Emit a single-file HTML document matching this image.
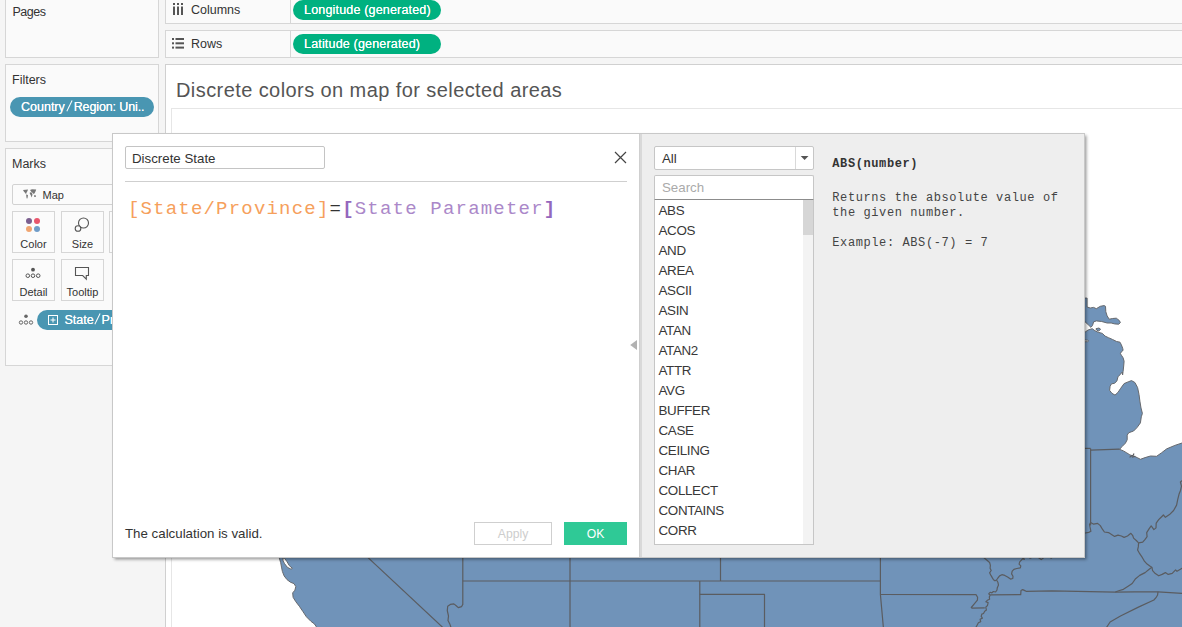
<!DOCTYPE html>
<html>
<head>
<meta charset="utf-8">
<title>Tableau - Discrete colors on map</title>
<style>
*{box-sizing:border-box;margin:0;padding:0}
html,body{width:1182px;height:627px;overflow:hidden}
body{background:#f5f5f5;font-family:"Liberation Sans",sans-serif;font-size:12.5px;color:#333;position:relative}
.a{position:absolute}
.t{position:absolute;white-space:nowrap;font-size:12.5px;line-height:14px;color:#333}
.card{position:absolute;left:5px;width:154px;background:#fafafa;border:1px solid #d6d6d6}
.shelf{position:absolute;left:165px;width:1030px;background:#fafafa;border:1px solid #d6d6d6}
.pill{position:absolute;height:20px;border-radius:10px}
.pt{position:absolute;white-space:nowrap;font-size:12.5px;line-height:14px;color:#fff;text-shadow:0 0 .4px #fff}
.green{background:#00b180}
.blue{background:#4996b2}
.mbtn{position:absolute;width:43px;height:42px;border:1px solid #d6d6d6;background:#fbfbfb}
#view{position:absolute;left:165px;top:64px;width:1030px;height:580px;background:#fff;border:1px solid #d0d0d0}
#title{position:absolute;left:176px;top:78px;font-size:20px;line-height:24px;color:#555;white-space:nowrap;letter-spacing:.42px}
#viz{position:absolute;left:171px;top:108px;width:1030px;height:540px;border-left:1px solid #e6e6e6;border-top:1px solid #e6e6e6}
#dlg{position:absolute;left:112px;top:133px;width:973px;height:425px;background:#eeeeee;border:1px solid #c8c8c8;box-shadow:1.5px 1.5px 3px rgba(0,0,0,.4)}
#dl{position:absolute;left:113px;top:134px;width:526px;height:423px;background:#fff}
#grip{position:absolute;left:639px;top:134px;width:3px;height:423px;background:#d9d9d9;border-left:1px solid #cfcfcf}
.mono{font-family:"Liberation Mono",monospace}
#code{position:absolute;left:127.9px;top:196px;font-size:19px;letter-spacing:1.2px;line-height:26px;white-space:pre}
.fn{position:absolute;left:658.5px;font-size:13.4px;letter-spacing:-.35px;line-height:20px;white-space:nowrap;color:#383838}
.d{font-size:13.3px}
</style>
</head>
<body>

<!-- left cards -->
<div class="card" style="top:-20px;height:78px"></div>
<div class="t" style="left:12.5px;top:4.5px;letter-spacing:-.5px">Pages</div>

<div class="card" style="top:64px;height:78px"></div>
<div class="t" style="left:12px;top:73px">Filters</div>
<div class="pill blue" style="left:10px;top:97px;width:144px"></div>
<div class="pt" style="left:21px;top:100px">Country<span style="display:inline-block;width:8.9px;height:10px;position:relative"><i style="position:absolute;left:3.9px;top:-.8px;width:1.25px;height:11.8px;background:#fff;transform:rotate(26deg)"></i></span><span style="letter-spacing:-.12px">Region: Uni..</span></div>

<div class="card" style="top:148px;height:218px"></div>
<div class="t" style="left:12px;top:157px">Marks</div>
<div class="a" style="left:12px;top:184px;width:140px;height:21px;border:1px solid #d2d2d2;background:#fbfbfb;border-radius:2px"></div>
<svg class="a" style="left:23px;top:189.3px" width="14" height="10.5" viewBox="0 0 14 10" preserveAspectRatio="none"><g fill="#777"><path d="M0 1l5-.6-.5 1.6-1 1.5L3 5 2 3.5 1 2.5z"/><path d="M3.4 5l1.6 1-.4 2-.6 1.6-.5-1.6-.3-1.5z"/><path d="M7 1l2-.8 4.2.3-.6 1.6-1 1.9-1.1 1L10 3.6 9 3.5z"/><path d="M6.9 3l2.1.5.5 2-1 2.5L7.8 6 6.8 4.5z"/><path d="M11 6h1.8v1.5h-1.5z"/></g></svg>
<div class="t" style="left:42.5px;top:188.3px;font-size:11px">Map</div>

<div class="mbtn" style="left:12px;top:211px"></div>
<div class="mbtn" style="left:61px;top:211px"></div>
<div class="mbtn" style="left:109px;top:211px"></div>
<div class="mbtn" style="left:12px;top:259px"></div>
<div class="mbtn" style="left:61px;top:259px"></div>
<svg class="a" style="left:24px;top:216px" width="18" height="18" viewBox="0 0 18 18"><circle cx="5" cy="5" r="3" fill="#7b5f8f"/><circle cx="13" cy="5" r="3" fill="#e8566c"/><circle cx="5" cy="13" r="3" fill="#f0a571"/><circle cx="13" cy="13" r="3" fill="#6f9cc8"/></svg>
<div class="t" style="left:12px;top:237px;width:43px;text-align:center;font-size:11px">Color</div>
<svg class="a" style="left:73px;top:216px" width="18" height="18" viewBox="0 0 18 18" fill="none" stroke="#555" stroke-width="1.1"><circle cx="10.5" cy="7" r="5"/><circle cx="5" cy="12.5" r="2.8" fill="#fbfbfb"/></svg>
<div class="t" style="left:61px;top:237px;width:43px;text-align:center;font-size:11px">Size</div>
<svg class="a" style="left:24px;top:266px" width="18" height="14" viewBox="0 0 18 14"><circle cx="9" cy="3.7" r="1.9" fill="#555"/><g fill="none" stroke="#555" stroke-width="1"><circle cx="3.8" cy="9.7" r="1.8"/><circle cx="9" cy="9.7" r="1.8"/><circle cx="14.2" cy="9.7" r="1.8"/></g></svg>
<div class="t" style="left:12px;top:285px;width:43px;text-align:center;font-size:11px">Detail</div>
<svg class="a" style="left:74px;top:266px" width="16" height="15" viewBox="0 0 16 15" fill="none" stroke="#555" stroke-width="1.1"><path d="M1.5 1.5h13v8h-2.2v3.6l-3.6-3.6H1.5z"/></svg>
<div class="t" style="left:61px;top:285px;width:43px;text-align:center;font-size:11px">Tooltip</div>

<svg class="a" style="left:18px;top:313px" width="18" height="14" viewBox="0 0 18 14"><circle cx="8" cy="3.2" r="1.8" fill="#666"/><g fill="none" stroke="#666" stroke-width="1"><circle cx="3" cy="9.5" r="1.7"/><circle cx="8" cy="9.5" r="1.7"/><circle cx="13" cy="9.5" r="1.7"/></g></svg>
<div class="pill blue" style="left:37px;top:310px;width:120px"></div>
<svg class="a" style="left:48px;top:315px" width="10" height="10" viewBox="0 0 10 10" fill="none" stroke="#fff" stroke-width="1"><rect x=".5" y=".5" width="9" height="9"/><path d="M2.5 5h5M5 2.5v5"/></svg>
<div class="pt" style="left:64.5px;top:313px">State<span style="display:inline-block;width:7.9px;height:10px;position:relative"><i style="position:absolute;left:3.4px;top:-.8px;width:1.25px;height:11.8px;background:#fff;transform:rotate(26deg)"></i></span>Province</div>

<!-- shelves -->
<div class="shelf" style="top:-10px;height:34px"></div>
<div class="shelf" style="top:30px;height:28px"></div>
<div class="a" style="left:290px;top:0;width:1px;height:23px;background:#d6d6d6"></div>
<div class="a" style="left:290px;top:31px;width:1px;height:26px;background:#d6d6d6"></div>
<svg class="a" style="left:172px;top:3px" width="12" height="12" viewBox="0 0 12 12" fill="#555"><rect x="1" y="0" width="2" height="2"/><rect x="5" y="0" width="2" height="2"/><rect x="9" y="0" width="2" height="2"/><rect x="1" y="3.5" width="2" height="8.5"/><rect x="5" y="3.5" width="2" height="8.5"/><rect x="9" y="3.5" width="2" height="8.5"/></svg>
<div class="t" style="left:191px;top:3px">Columns</div>
<svg class="a" style="left:172px;top:38px" width="12" height="11" viewBox="0 0 12 11" fill="#555"><rect x="0" y="0" width="2" height="2"/><rect x="0" y="4.3" width="2" height="2"/><rect x="0" y="8.6" width="2" height="2"/><rect x="3.5" y="0" width="8.5" height="2"/><rect x="3.5" y="4.3" width="8.5" height="2"/><rect x="3.5" y="8.6" width="8.5" height="2"/></svg>
<div class="t" style="left:191px;top:37px">Rows</div>
<div class="pill green" style="left:293px;top:0;width:148px"></div>
<div class="pt" style="left:304px;top:3px;letter-spacing:.18px">Longitude (generated)</div>
<div class="pill green" style="left:293px;top:34px;width:148px"></div>
<div class="pt" style="left:304px;top:37px;letter-spacing:.18px">Latitude (generated)</div>

<!-- view -->
<div id="view"></div>
<div id="title">Discrete colors on map for selected areas</div>
<div id="viz"></div>
<svg class="a" style="left:0;top:0" width="1182" height="627" viewBox="0 0 1182 627">
<g fill="#7093b9" stroke="#66696e" stroke-width="1" stroke-linejoin="round">
<path d="M278.0,548.4 279.2,557.7 280.7,562.7 281.5,567.1 282.4,571.5 284.2,576.0 286.9,579.5 290.4,582.2 294.0,583.6 295.8,586.6 294.9,590.2 292.7,592.9 293.1,597.3 295.8,601.7 299.3,606.2 302.9,611.5 306.4,616.8 310.9,621.3 314.4,623.9 316.5,627.0 318.9,630.2 330.0,640.0 1195.0,640.0 1195.0,441.0 1184.4,442.0 1182.0,443.0 1174.9,445.4 1166.8,448.8 1161.4,452.9 1156.6,456.3 1150.5,456.0 1145.1,457.6 1140.4,459.3 1137.6,457.8 1134.3,456.3 1129.9,454.9 1126.8,452.9 1123.4,450.9 1119.3,449.2 1119.3,449.6 1122.0,446.6 1125.4,443.2 1127.2,439.8 1127.2,435.1 1128.8,432.7 1133.6,431.0 1137.0,427.6 1140.4,422.9 1141.3,416.8 1142.4,413.4 1141.0,408.0 1139.9,401.2 1139.0,394.4 1137.6,387.6 1134.9,382.5 1131.5,380.6 1128.1,381.9 1124.1,383.6 1120.7,388.3 1118.0,392.4 1115.0,395.1 1111.9,393.3 1109.6,390.3 1110.1,386.3 1111.5,383.8 1114.6,383.3 1116.9,380.9 1118.0,376.8 1120.0,374.7 1122.3,372.0 1122.6,375.0 1123.1,371.4 1123.7,366.0 1124.1,361.2 1123.1,357.8 1121.8,355.8 1120.4,353.7 1121.4,351.7 1123.1,350.4 1122.7,348.3 1121.4,344.9 1120.0,342.2 1116.6,341.5 1112.6,339.5 1108.5,337.7 1105.1,336.1 1102.4,333.4 1098.3,332.3 1094.9,330.7 1092.2,328.7 1088.1,330.0 1085.2,332.0 1080.0,332.0 1075.0,332.0 1075.0,545.0 279.0,545.0Z"/>
<path d="M1080.0,298.1 1087.1,298.1 1087.1,307.0 1090.2,308.0 1093.6,307.4 1096.3,308.7 1100.3,306.3 1104.1,305.6 1105.5,306.3 1105.8,311.7 1107.1,315.8 1109.2,319.2 1112.6,318.5 1116.3,318.2 1119.3,320.5 1120.4,322.6 1118.7,324.2 1114.6,323.9 1111.2,323.0 1107.1,323.0 1101.7,321.5 1096.3,320.9 1093.6,321.9 1092.5,325.5 1090.9,327.3 1088.1,324.6 1085.2,321.9 1080.0,321.9Z"/>
<path d="M1096.0,328.7 1099.0,328.0 1100.6,329.3 1098.7,331.0 1096.5,330.0Z"/>
</g>
<g fill="#fff" stroke="#66696e" stroke-width="1" stroke-linejoin="round">
<path d="M282.8,558.0 284.6,558.4 287.1,561.8 289.2,565.5 292.4,568.3 291.0,569.2 287.4,567.3 284.6,563.7 283.1,560.9Z"/>
<path d="M1084.1,339.9 1087.5,340.2 1088.7,340.9 1087.5,341.7 1084.1,341.8Z"/>
</g>
<g fill="none" stroke="#5a5c60" stroke-width="1.2" stroke-linejoin="round">
<path d="M334.6,526.4 450.0,634.2"/>
<path d="M462.8,540.0 462.8,604.4 461.5,606.7 458.3,607.6 456.2,605.7 453.9,603.9 450.3,604.4 447.7,606.2 447.3,610.6 448.5,616.0 448.0,620.4 449.8,623.9 450.8,627.0 451.6,630.2"/>
<path d="M462.8,581.0 880.4,581.0"/>
<path d="M570.0,540.0 570.0,640.0"/>
<path d="M720.5,540.0 720.5,581.0"/>
<path d="M699.8,581.0 699.8,640.0"/>
<path d="M699.8,594.4 764.5,594.4 764.5,640.0"/>
<path d="M880.4,540.0 880.4,594.4 884.5,640.0"/>
<path d="M880.4,594.5 976.0,594.6 977.6,597.3 977.4,600.1 974.7,603.4 971.3,607.5 972.0,608.2 984.8,607.9"/>
<path d="M981.8,555.0 984.1,557.9 987.0,560.2 989.6,562.5 990.4,565.3 990.1,568.2 991.2,570.5 989.6,572.8 990.8,575.1 992.1,577.4 993.5,579.7 995.0,580.8 996.5,580.0"/>
<path d="M996.5,580.0 997.9,578.0 999.6,575.9 1001.9,574.7 1004.8,575.4 1007.6,577.0 1010.5,579.1 1012.8,578.5 1013.0,576.2 1011.6,573.9 1012.2,571.1 1013.9,569.3 1016.8,568.5 1020.3,567.9 1020.8,565.9 1019.1,564.2 1019.7,561.9 1021.4,560.2 1022.9,558.4 1024.3,559.4 1023.4,557.5 1026.8,556.1 1030.2,558.2 1032.9,556.9 1038.3,557.4 1041.3,559.6 1044.4,557.1 1049.1,556.6 1051.2,558.2 1053.2,556.6"/>
<path d="M996.5,580.0 997.9,582.3 998.5,585.1 997.3,587.7 997.0,590.0 995.6,592.0 993.3,591.5 991.9,592.9 990.1,592.3 988.7,593.8 990.1,595.2 989.3,596.9 989.6,599.2 987.3,600.3 985.8,601.8 988.1,602.6 987.5,605.5 985.8,607.2 986.4,610.1 984.7,611.2 983.5,613.5 981.8,614.1 981.2,616.4 982.4,618.1 980.1,619.3 980.7,621.6 978.4,622.7 977.2,625.0 976.1,627.0 975.2,629.0"/>
<path d="M990.2,594.9 1020.7,594.6 1021.0,590.6 1022.7,589.6 1024.8,590.6 1026.1,591.3 1051.8,590.8 1090.0,591.7 1115.3,592.2 1134.3,591.9 1158.0,591.8 1182.0,593.4 1184.4,593.5"/>
<path d="M1080.0,448.4 1090.6,448.4"/>
<path d="M1090.6,450.2 1119.3,449.2"/>
<path d="M1129.6,457.4 1131.3,456.0 1133.2,455.3 1134.0,453.6"/>
<path d="M1131.8,457.2 1135.3,456.3"/>
<path d="M1090.6,448.4 1090.6,525.0 1090.6,522.5"/>
<path d="M1090.6,522.5 1089.5,524.5 1090.2,527.9 1090.9,531.3 1088.8,532.4 1085.2,533.0 1080.0,533.4"/>
<path d="M1090.6,522.5 1093.6,524.2 1097.6,523.4 1100.3,525.6 1102.4,529.2 1104.4,532.0 1108.5,532.6 1111.9,534.7 1114.6,536.4 1118.0,535.1 1121.4,536.0 1124.1,537.4 1127.5,536.0 1130.9,533.3 1132.6,535.3 1133.6,538.1 1136.3,540.5 1138.6,542.8"/>
<path d="M1138.6,542.8 1142.7,542.1 1145.1,539.4 1147.1,536.7 1146.7,532.6 1149.2,528.6 1151.2,525.9 1153.9,529.6 1156.0,527.9 1156.2,523.1 1158.7,519.7 1161.4,517.0 1163.4,515.0 1165.4,517.3 1169.5,514.6 1173.6,510.5 1176.6,505.1 1177.7,499.7 1179.0,494.3 1180.6,490.2 1181.5,486.1 1180.4,482.0 1182.0,480.7 1184.4,479.3"/>
<path d="M1138.6,542.8 1138.3,546.9 1137.6,550.0 1139.7,553.7 1142.4,557.7 1144.4,561.1 1147.1,564.1 1150.5,566.5 1151.9,567.2"/>
<path d="M1151.9,567.2 1152.6,570.6 1155.3,573.6 1158.7,575.8 1162.1,574.4 1165.4,572.6 1168.2,574.4 1172.2,573.3 1175.6,569.9 1177.0,571.3 1180.4,569.3 1182.0,568.3 1184.4,567.2"/>
<path d="M1151.9,567.2 1149.2,569.3 1145.1,572.6 1139.7,575.4 1135.6,578.7 1132.2,583.5 1128.1,586.2 1123.4,589.3 1118.7,590.7 1115.3,592.0"/>
<path d="M1158.0,591.8 1157.6,595.0 1156.0,597.7 1153.9,600.0 1138.4,607.1 1120.5,616.0 1110.1,622.0 1106.2,627.9 1104.1,632.4"/>
</g></svg>

<!-- dialog -->
<div id="dlg"></div>
<div id="dl"></div>
<div id="grip"></div>
<div class="a" style="left:125px;top:146px;width:200px;height:23px;border:1px solid #c4c4c4;border-radius:2px;background:#fff"></div>
<div class="t d" style="left:132px;top:152px">Discrete State</div>
<svg class="a" style="left:614px;top:151px" width="13" height="13" viewBox="0 0 13 13" stroke="#444" stroke-width="1.2" fill="none"><path d="M1 1l11 11M12 1L1 12"/></svg>
<div class="a" style="left:125px;top:181px;width:502px;height:1px;background:#cfcfcf"></div>
<div id="code" class="mono"><span style="color:#f6a05c">[State/Province]</span><span style="color:#333">=</span><span style="color:#ab88c9"><b style="color:#9467bd">[</b>State Parameter<b style="color:#9467bd">]</b></span></div>
<div class="t d" style="left:125px;top:527px">The calculation is valid.</div>
<div class="a" style="left:474px;top:522px;width:78px;height:23px;border:1px solid #cfcfcf;background:#fff"></div>
<div class="t d" style="left:474px;top:527px;width:78px;text-align:center;color:#cdcdcd;font-size:12.2px">Apply</div>
<div class="a" style="left:564px;top:522px;width:63px;height:23px;background:#2fc996"></div>
<div class="t d" style="left:564px;top:527px;width:63px;text-align:center;color:#fff;font-size:12.2px">OK</div>
<svg class="a" style="left:629px;top:339px" width="9" height="12" viewBox="0 0 9 12"><path d="M8 1v10L1.2 6z" fill="#b2b2b2"/></svg>

<!-- right pane -->
<div class="a" style="left:654px;top:146px;width:160px;height:24px;border:1px solid #c6c6c6;background:#fff;border-radius:2px"></div>
<div class="t d" style="left:662px;top:152px">All</div>
<div class="a" style="left:795px;top:147px;width:1px;height:22px;background:#d9d9d9"></div>
<svg class="a" style="left:800px;top:155px" width="9" height="6" viewBox="0 0 9 6"><path d="M.7 1h7.8L4.6 5z" fill="#555"/></svg>
<div class="a" style="left:654px;top:175px;width:160px;height:25px;border:1px solid #c6c6c6;border-bottom:1px solid #8c8c8c;background:#fff;border-radius:2px 2px 0 0"></div>
<div class="t d" style="left:662px;top:181px;color:#aaa">Search</div>
<div class="a" style="left:654px;top:200px;width:160px;height:345px;border:1px solid #c6c6c6;border-top:none;background:#fff"></div>
<div class="fn" style="top:201px">ABS</div><div class="fn" style="top:221px">ACOS</div><div class="fn" style="top:241px">AND</div><div class="fn" style="top:261px">AREA</div><div class="fn" style="top:281px">ASCII</div><div class="fn" style="top:301px">ASIN</div><div class="fn" style="top:321px">ATAN</div><div class="fn" style="top:341px">ATAN2</div><div class="fn" style="top:361px">ATTR</div><div class="fn" style="top:381px">AVG</div><div class="fn" style="top:401px">BUFFER</div><div class="fn" style="top:421px">CASE</div><div class="fn" style="top:441px">CEILING</div><div class="fn" style="top:461px">CHAR</div><div class="fn" style="top:481px">COLLECT</div><div class="fn" style="top:501px">CONTAINS</div><div class="fn" style="top:521px">CORR</div>
<div class="a" style="left:803px;top:200px;width:10px;height:344px;background:#f3f3f3"></div>
<div class="a" style="left:803px;top:200px;width:10px;height:35px;background:#d6d6d6"></div>
<div class="a mono" style="left:832.3px;top:157px;font-size:12px;letter-spacing:.6px;line-height:15px;white-space:pre;color:#333"><b>ABS(number)</b></div>
<div class="a mono" style="left:832.3px;top:191px;font-size:12px;letter-spacing:.6px;line-height:15px;white-space:pre;color:#444">Returns the absolute value of
the given number.

Example: ABS(-7) = 7</div>

</body>
</html>
